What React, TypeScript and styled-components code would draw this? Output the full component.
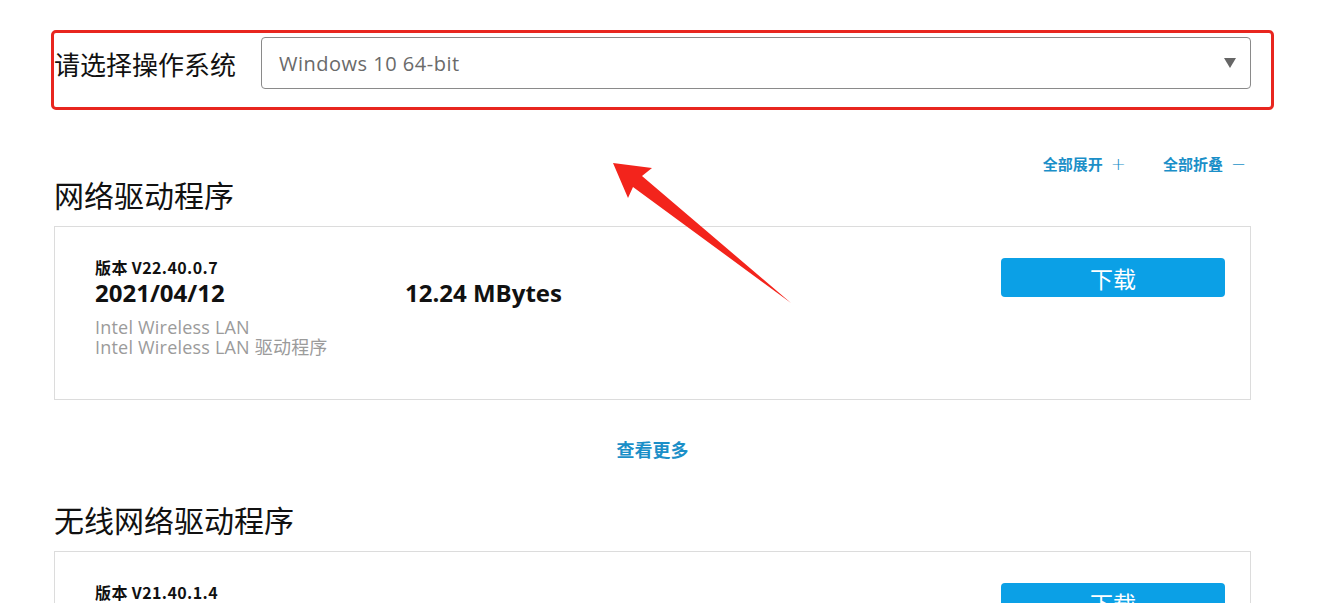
import React from "react";
import styled, { createGlobalStyle } from "styled-components";

const GlobalStyle = createGlobalStyle`
  html, body {
    margin: 0;
    padding: 0;
    background: #fff;
  }
  body {
    font-family: "Noto Sans", "Noto Sans CJK SC", sans-serif;
    color: #111;
  }
`;

const Page = styled.div`
  position: relative;
  width: 1340px;
  height: 603px;
  overflow: hidden;
  padding: 37px 0 0 54px;
  box-sizing: border-box;
`;

const Column = styled.div`
  width: 1197px;
`;

const OsRow = styled.div`
  position: relative;
  display: flex;
  align-items: center;
`;

const OsLabel = styled.label`
  flex: 0 0 207px;
  font-family: "Noto Sans CJK SC", sans-serif;
  font-size: 26px;
  color: #111;
`;

const Select = styled.div`
  position: relative;
  flex: 1;
  height: 52px;
  box-sizing: border-box;
  border: 1px solid #8a8a8a;
  border-radius: 4px;
  display: flex;
  align-items: center;
  padding: 0 17px;
  font-family: "Open Sans", "Noto Sans", sans-serif;
  font-size: 20px;
  letter-spacing: 0.5px;
  color: #6a6a6a;
`;

const Caret = styled.span`
  margin-left: auto;
  margin-right: -3px;
  width: 0;
  height: 0;
  border-left: 6px solid transparent;
  border-right: 6px solid transparent;
  border-top: 10px solid #666;
`;

// red annotation frame drawn over the selector row
const Highlight = styled.div`
  position: absolute;
  left: -3px;
  top: -7px;
  width: 1223px;
  height: 80px;
  box-sizing: border-box;
  border: 3px solid #e8261f;
  border-radius: 5px;
  pointer-events: none;
`;

const Toolbar = styled.div`
  display: flex;
  justify-content: flex-end;
  gap: 37px;
  margin-top: 65px;
  padding-right: 5px;
  height: 20px;
`;

const ToolLink = styled.a`
  display: flex;
  align-items: center;
  gap: 8px;
  font-family: "Noto Sans CJK SC", sans-serif;
  font-size: 15px;
  font-weight: 700;
  line-height: 20px;
  color: #1b8fc8;
  text-decoration: none;
`;

const Sign = styled.span`
  font-family: "DejaVu Sans", sans-serif;
  font-size: 18px;
  font-weight: 300;
  line-height: 20px;
`;

const SectionTitle = styled.h2`
  margin: 0 0 12px 0;
  font-family: "Noto Sans CJK SC", sans-serif;
  font-size: 30px;
  font-weight: 400;
  line-height: 40px;
  color: #111;
`;

const Card = styled.div`
  box-sizing: border-box;
  height: 174px;
  border: 1px solid #dcdcdc;
  padding: 30px 25px 0 40px;
  display: grid;
  grid-template-columns: 310px 1fr 224px;
  align-items: start;
`;

const Version = styled.div`
  font-family: "Noto Sans CJK SC", sans-serif;
  font-size: 16px;
  font-weight: 700;
  line-height: 20px;
  letter-spacing: 0.4px;
  color: #111;
`;

const BigValue = styled.div<{ $offset?: number }>`
  font-family: "Open Sans", "Noto Sans", sans-serif;
  font-size: 24px;
  font-weight: 700;
  line-height: 28px;
  margin-top: ${(p) => p.$offset ?? 2}px;
  color: #111;
`;

const Desc = styled.div`
  margin-top: 10px;
  font-family: "Open Sans", "Noto Sans CJK SC", sans-serif;
  font-size: 18px;
  line-height: 20px;
  letter-spacing: 0.2px;
  color: #9b9b9b;
`;

const DownloadButton = styled.button`
  margin-top: 1px;
  height: 39px;
  border: none;
  border-radius: 4px;
  background: #0ba0e6;
  color: #fff;
  font-family: "Noto Sans CJK SC", sans-serif;
  font-size: 23px;
  cursor: pointer;
`;

const MoreLink = styled.a`
  display: block;
  margin: 37px 0 38px;
  text-align: center;
  font-family: "Noto Sans CJK SC", sans-serif;
  font-size: 18px;
  font-weight: 700;
  line-height: 24px;
  color: #1b8fc8;
  text-decoration: none;
`;

const Pointer = styled.svg`
  position: absolute;
  left: 0;
  top: 0;
  pointer-events: none;
`;

type Driver = {
  version: string;
  date: string;
  size: string;
  lines: string[];
};

const DriverCard: React.FC<{ driver: Driver }> = ({ driver }) => (
  <Card>
    <div>
      <Version>版本 {driver.version}</Version>
      <BigValue>{driver.date}</BigValue>
      <Desc>
        {driver.lines.map((l) => (
          <div key={l}>{l}</div>
        ))}
      </Desc>
    </div>
    <BigValue $offset={22}>{driver.size}</BigValue>
    <DownloadButton>下载</DownloadButton>
  </Card>
);

const lan: Driver = {
  version: "V22.40.0.7",
  date: "2021/04/12",
  size: "12.24 MBytes",
  lines: ["Intel Wireless LAN", "Intel Wireless LAN 驱动程序"],
};

const wlan: Driver = {
  version: "V21.40.1.4",
  date: "2021/03/02",
  size: "18.60 MBytes",
  lines: ["Intel Wireless LAN", "Intel Wireless LAN 驱动程序"],
};

export default function App() {
  return (
    <>
      <GlobalStyle />
      <Page>
        <Column>
          <OsRow>
            <OsLabel>请选择操作系统</OsLabel>
            <Select>
              Windows 10 64-bit
              <Caret />
            </Select>
            <Highlight />
          </OsRow>

          <Toolbar>
            <ToolLink href="#">
              全部展开 <Sign>+</Sign>
            </ToolLink>
            <ToolLink href="#">
              全部折叠 <Sign>−</Sign>
            </ToolLink>
          </Toolbar>

          <SectionTitle>网络驱动程序</SectionTitle>
          <DriverCard driver={lan} />
          <MoreLink href="#">查看更多</MoreLink>

          <SectionTitle>无线网络驱动程序</SectionTitle>
          <DriverCard driver={wlan} />
        </Column>

        <Pointer width="1340" height="603" viewBox="0 0 1340 603">
          <polygon
            points="613,163 652,168 642,176 791,303 633,187 628,198"
            fill="#f3241c"
          />
        </Pointer>
      </Page>
    </>
  );
}
